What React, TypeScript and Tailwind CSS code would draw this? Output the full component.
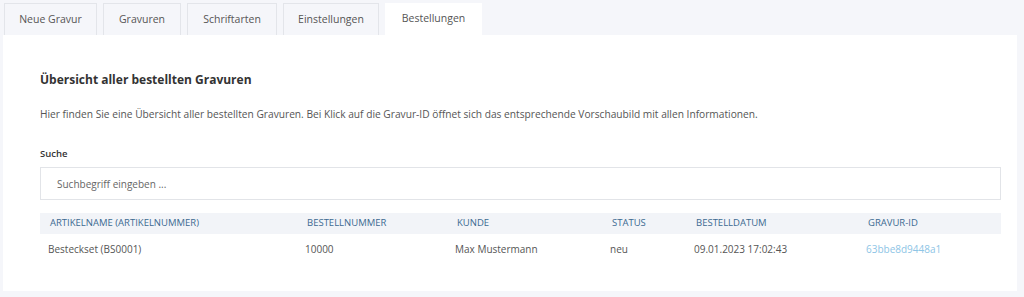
import { useState } from "react";

const tabs = [
    { label: "Neue Gravur", w: "w-[93px]" },
    { label: "Gravuren", w: "w-[78px]" },
    { label: "Schriftarten", w: "w-[90px]" },
    { label: "Einstellungen", w: "w-[96px]" },
    { label: "Bestellungen", w: "w-[97px]" },
];

const columns = [
    "Artikelname (Artikelnummer)",
    "Bestellnummer",
    "Kunde",
    "Status",
    "Bestelldatum",
    "Gravur-ID",
];

const orders = [
    {
        article: "Besteckset (BS0001)",
        number: "10000",
        customer: "Max Mustermann",
        status: "neu",
        date: "09.01.2023 17:02:43",
        id: "63bbe8d9448a1",
    },
];

const gridCols = "grid grid-cols-[257px_150px_155px_84px_172px_1fr]";

const App = () => {
    const [active, setActive] = useState("Bestellungen");
    const [query, setQuery] = useState("");

    return (
        <div className="min-h-[297px] bg-[#f5f6fa] pt-[3px] pl-[3px] pr-[7px] font-['Open_Sans',sans-serif] text-[#555]">
            {/* tabs */}
            <div className="flex gap-[6px] pl-[1px]">
                {tabs.map((tab) => (
                    <button
                        key={tab.label}
                        onClick={() => setActive(tab.label)}
                        className={
                            tab.label === active
                                ? `h-[32px] ${tab.w} bg-white text-[10.5px] text-[#555]`
                                : `h-[32px] ${tab.w} border border-b-0 border-[#e3e5ea] bg-[#f5f6fa] text-[10.5px] text-[#555]`
                        }
                    >
                        {tab.label}
                    </button>
                ))}
            </div>

            {/* card */}
            <div className="h-[256px] bg-white pl-[37px] pr-[16px] pt-[35px]">
                <h2 className="text-[12px] font-bold leading-[20px] text-[#333]">
                    Übersicht aller bestellten Gravuren
                </h2>
                <p className="mt-[16px] text-[10.2px] leading-[16px] text-[#555]">
                    Hier finden Sie eine Übersicht aller bestellten Gravuren. Bei Klick auf die Gravur-ID öffnet sich das entsprechende Vorschaubild mit allen Informationen.
                </p>

                <label className="mt-[25px] block text-[9.5px] font-semibold leading-[14px] text-[#333]">
                    Suche
                </label>
                <input
                    type="text"
                    value={query}
                    onChange={(e) => setQuery(e.target.value)}
                    placeholder="Suchbegriff eingeben ..."
                    className="mt-[6px] h-[33px] w-full border border-[#e2e4e8] px-[16px] text-[10px] text-[#555] outline-none placeholder:text-[#666]"
                />

                {/* table */}
                <div className="mt-[13px]">
                    <div className={`${gridCols} h-[21px] items-center bg-[#f2f4f8] pl-[10px]`}>
                        {columns.map((c) => (
                            <div key={c} className="text-[9.5px] font-medium uppercase text-[#3c6a91]">
                                {c}
                            </div>
                        ))}
                    </div>
                    {orders.map((o) => (
                        <div key={o.id} className={`${gridCols} h-[30px] items-center pl-[8px] text-[10px] text-[#555]`}>
                            <div>{o.article}</div>
                            <div>{o.number}</div>
                            <div>{o.customer}</div>
                            <div>{o.status}</div>
                            <div>{o.date}</div>
                            <a href="#" className="text-[#8ec5e6]">
                                {o.id}
                            </a>
                        </div>
                    ))}
                </div>
            </div>
        </div>
    );
};

export default App;
